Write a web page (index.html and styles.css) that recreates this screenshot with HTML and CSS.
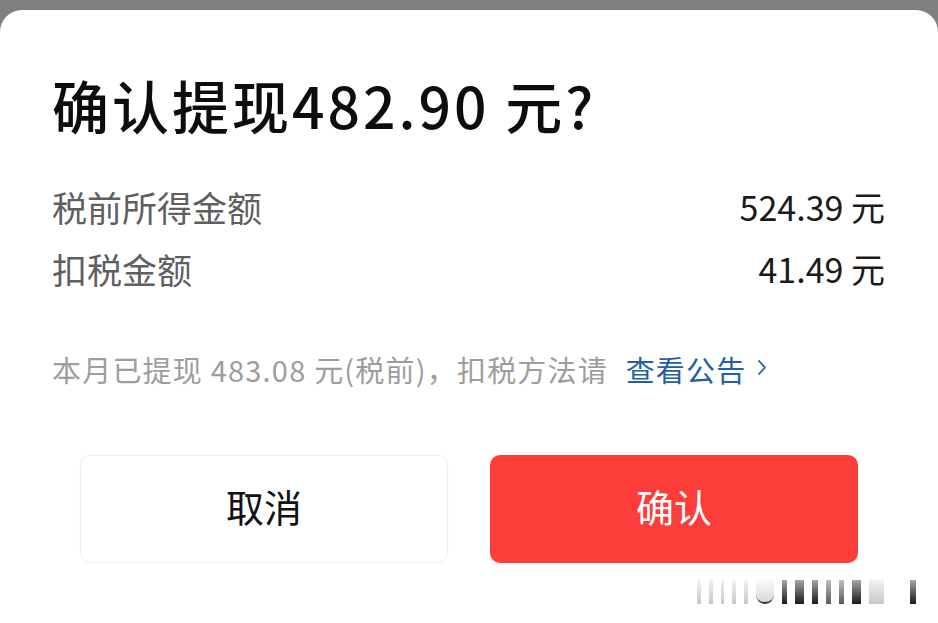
FILE: index.html
```html
<!DOCTYPE html>
<html lang="zh-CN">
<head>
<meta charset="utf-8">
<title>确认提现</title>
<link rel="stylesheet" href="styles.css">
</head>
<body>
<div class="screen">
  <div class="dialog">
    <h1 class="title">确认提现482.90 元?</h1>
    <div class="row row-first">
      <span class="label">税前所得金额</span>
      <span class="value">524.39 元</span>
    </div>
    <div class="row">
      <span class="label">扣税金额</span>
      <span class="value">41.49 元</span>
    </div>
    <p class="notice">本月已提现 483.08 元(税前)，扣税方法请 <a class="link" href="#">查看公告<svg class="chev" width="11" height="17" viewBox="0 0 11 17"><polyline points="3,2 9,8.5 3,15" fill="none" stroke="#235fa5" stroke-width="1.8" stroke-linecap="round" stroke-linejoin="round"/></svg></a></p>
    <div class="actions">
      <button class="btn btn-cancel">取消</button>
      <button class="btn btn-ok">确认</button>
    </div>
    <div class="watermark">
      <i class="b l w4"></i><i class="b l w4"></i><i class="b l w3"></i><i class="b l w4"></i><i class="b l w4"></i><i class="b g"></i><i class="b d w5"></i><i class="b d w9"></i><i class="b d w6"></i><i class="b m w5"></i><i class="b m w5"></i><i class="b d w9"></i><i class="b l w15"></i><i class="b d w6"></i>
    </div>
  </div>
</div>
</body>
</html>
```
FILE: styles.css
```css
* { box-sizing: border-box; }
html, body {
  margin: 0;
  padding: 0;
  background: #7f7f7f;
}
body {
  font-family: "Noto Sans CJK SC", "Noto Sans", sans-serif;
}
.screen {
  width: 938px;
  height: 623px;
  padding-top: 10px;
  overflow: hidden;
}
.dialog {
  position: relative;
  height: 613px;
  background: #fff;
  border-radius: 22px 22px 0 0;
  padding: 66px 53px 0 52px;
}
.title {
  margin: 0;
  font-size: 57px;
  line-height: 57px;
  font-weight: 500;
  color: #0d0d0d;
  letter-spacing: 3px;
}
.row {
  display: flex;
  justify-content: space-between;
  align-items: center;
  font-size: 35px;
  line-height: 35px;
  margin-top: 27px;
}
.row-first { margin-top: 56px; }
.label { color: #5f5f5f; }
.value { color: #1b1b1b; font-size: 34px; }
.notice {
  margin: 69px 0 0;
  font-size: 29px;
  line-height: 29px;
  color: #9d9d9d;
  letter-spacing: 1.2px;
  white-space: nowrap;
}
.link {
  color: #235fa5;
  text-decoration: none;
  margin-left: 10px;
}
.chev {
  margin-left: 10px;
  vertical-align: 6px;
}
.actions {
  display: grid;
  grid-template-columns: 1fr 1fr;
  gap: 42px;
  margin: 71px 27px 0 28px;
}
.btn {
  height: 108px;
  border-radius: 10px;
  font-family: inherit;
  font-size: 38px;
  line-height: 1;
  border: 0;
  padding: 0 0 6px;
}
.btn-cancel {
  background: #fff;
  color: #111;
  border: 1px solid #f1f1f1;
  box-shadow: 0 0 2px rgba(0,0,0,0.04);
}
.btn-ok {
  background: #fc3d39;
  color: #fff;
}
.watermark {
  position: absolute;
  left: 697px;
  top: 570px;
  display: flex;
  gap: 8px;
  height: 24px;
  align-items: stretch;
}
.b { display: block; }
.w3 { width: 3px; }
.w4 { width: 4px; }
.w5 { width: 5px; }
.w6 { width: 6px; }
.w9 { width: 9px; }
.w15 { width: 15px; margin: 0 18px 0 0; }
.l { background: linear-gradient(to bottom, rgba(0,0,0,0.05), rgba(0,0,0,0.22)); }
.m { background: linear-gradient(to bottom, rgba(0,0,0,0.25), rgba(0,0,0,0.65)); }
.d { background: linear-gradient(to bottom, rgba(0,0,0,0.35), rgba(0,0,0,0.9)); }
.g {
  width: 18px;
  border-bottom: 2px solid #333;
  border-radius: 0 0 9px 9px;
  background: linear-gradient(to bottom, rgba(0,0,0,0.02), rgba(0,0,0,0.15));
}
```
